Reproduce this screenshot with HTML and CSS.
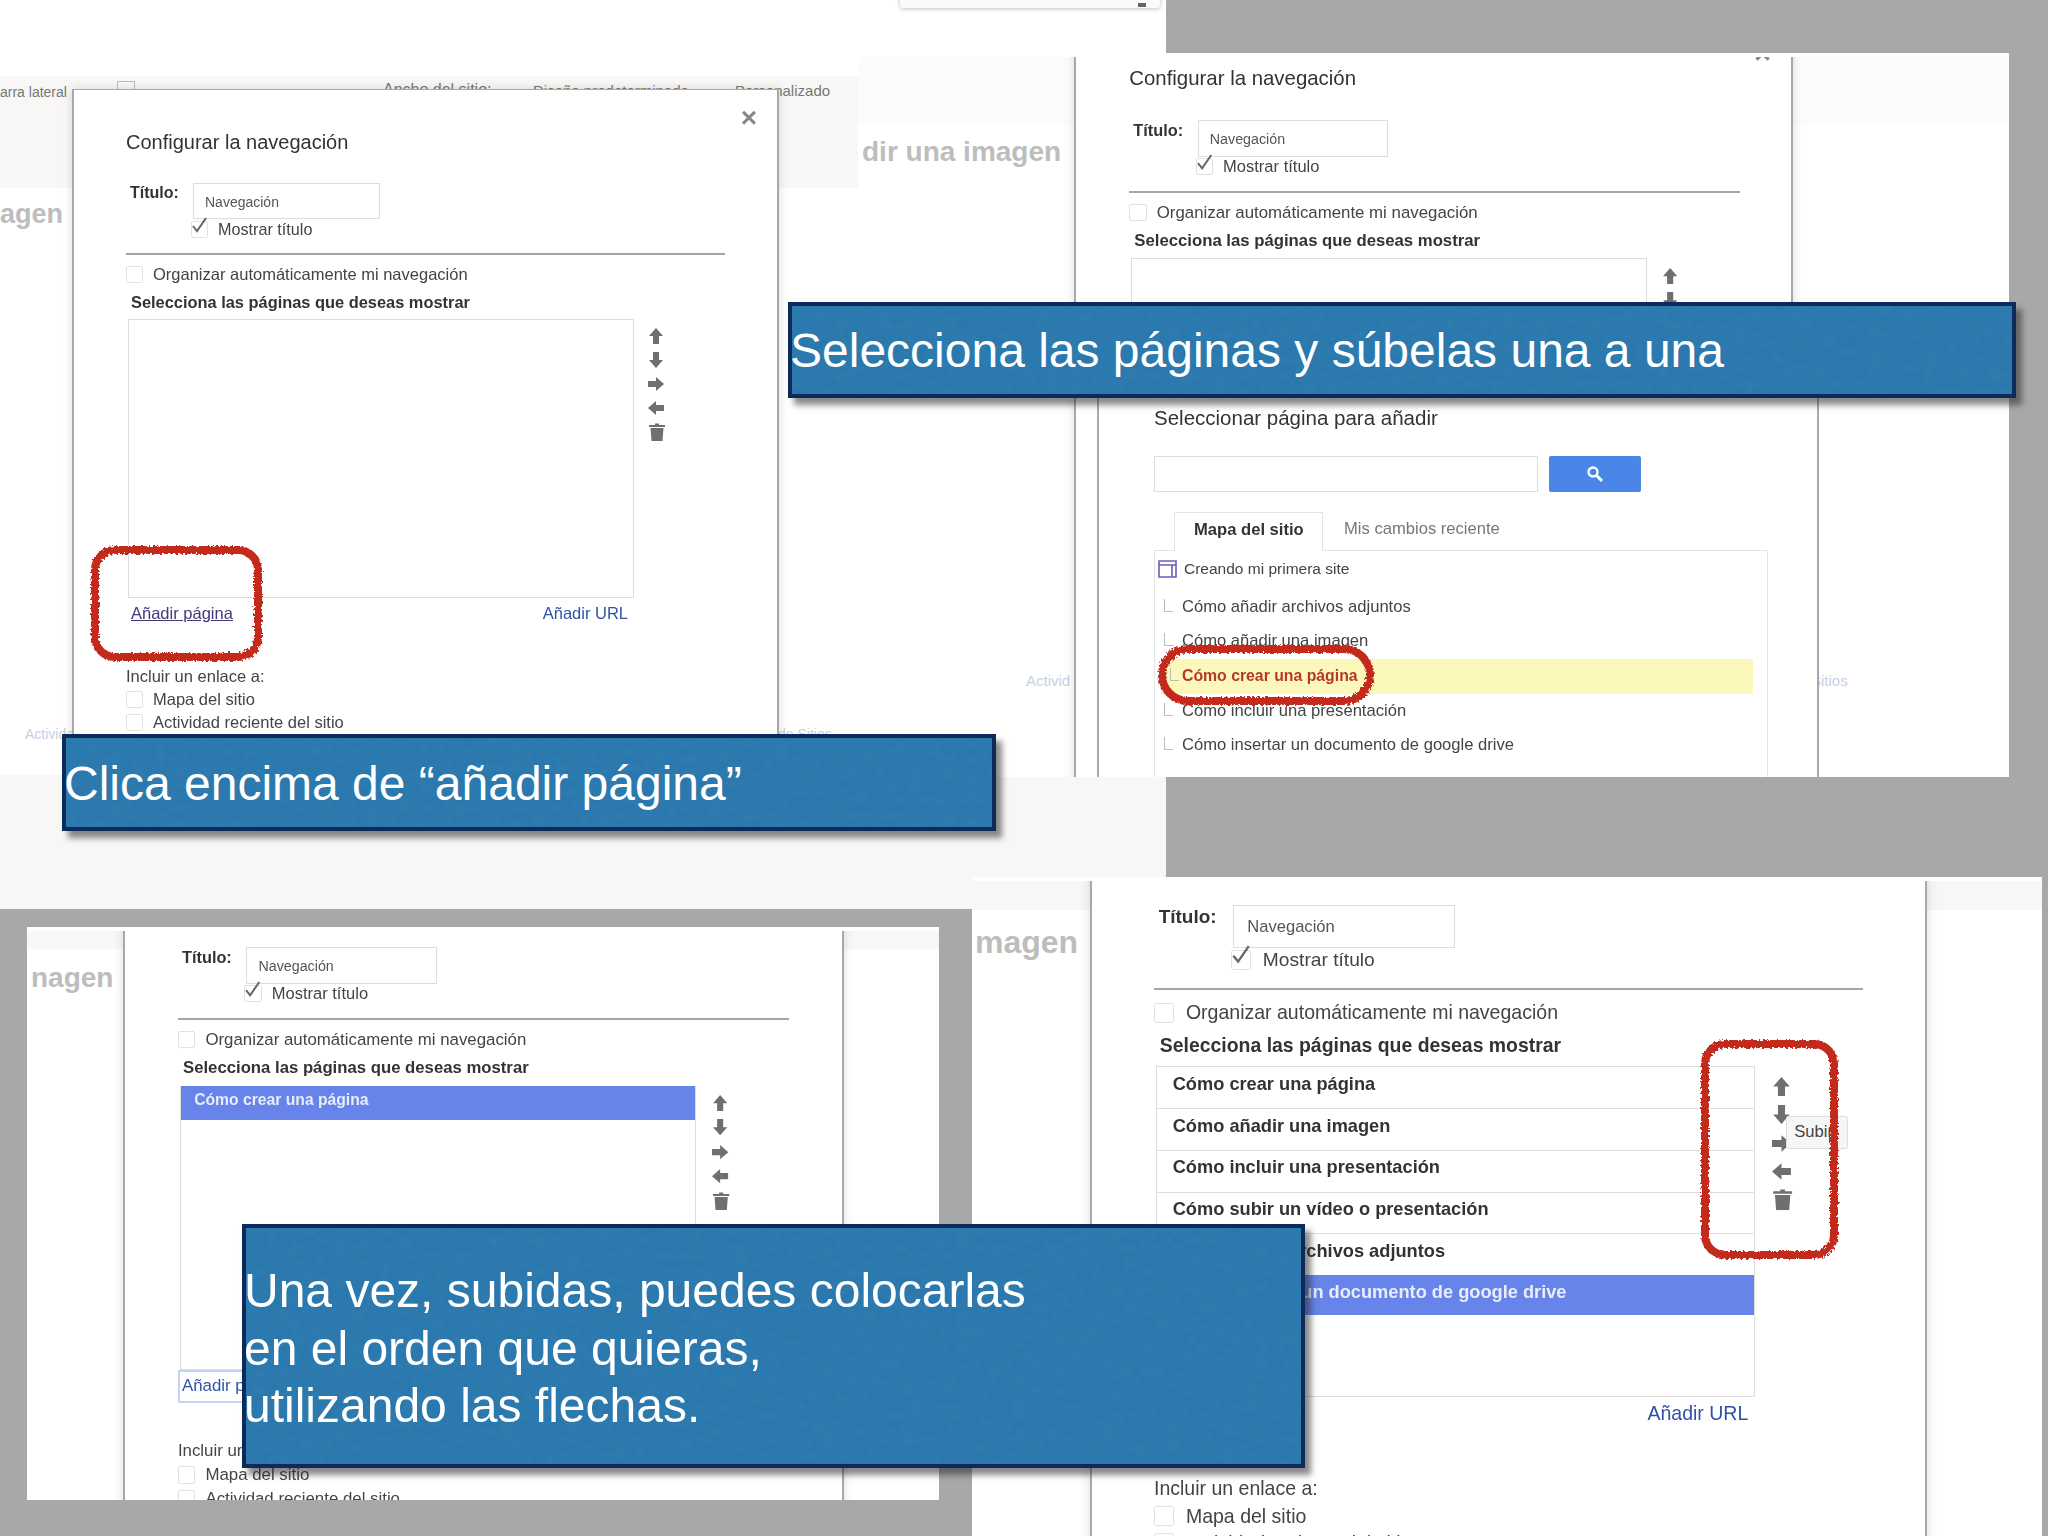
FILE: index.html
```html
<!DOCTYPE html>
<html lang="es">
  <head>
    <meta charset="UTF-8" />
    <title>Configurar la navegación</title>
    <link rel="stylesheet" href="styles.css">
  </head>
  <body>
    <svg class="defs" width="0" height="0">
      <defs>
        <filter id="rough" x="-10%" y="-10%" width="120%" height="120%">
          <feTurbulence type="fractalNoise" baseFrequency="0.4" numOctaves="3" seed="4" />
          <feDisplacementMap in="SourceGraphic" scale="5" />
        </filter>
        <filter id="grain" x="0" y="0" width="100%" height="100%">
          <feTurbulence type="fractalNoise" baseFrequency="0.09 0.12" numOctaves="4" seed="2" />
          <feColorMatrix values="0 0 0 0 0.08  0 0 0 0 0.32  0 0 0 0 0.52  0 0 0 1.4 -0.5" />
        </filter>
        <symbol id="i-up" viewBox="0 0 16 16"><path d="M8 0 L15 8 H11 V16 H5 V8 H1 Z" /></symbol>
        <symbol id="i-down" viewBox="0 0 16 16"><path d="M5 0 H11 V8 H15 L8 16 L1 8 H5 Z" /></symbol>
        <symbol id="i-right" viewBox="0 0 16 16"><path d="M0 5 H8 V1 L16 8 L8 15 V11 H0 Z" /></symbol>
        <symbol id="i-left" viewBox="0 0 16 16"><path d="M16 5 H8 V1 L0 8 L8 15 V11 H16 Z" /></symbol>
        <symbol id="i-trash" viewBox="0 0 16 18"><path d="M6 2 V0.5 H10 V2 H16 V4 H0 V2 Z M1.5 5 H14.5 L13.5 18 H2.5 Z" /></symbol>
        <symbol id="i-check" viewBox="0 0 18 18"><path d="M2 9 L6 14 L15 1" fill="none" stroke="#666" stroke-width="2" /></symbol>
      </defs>
    </svg>

    <!-- abajo a la derecha -->
    <section class="panel panel-d">
      <div class="strip strip-top"></div>
      <div class="ghost-title">magen</div>
      <div class="dialog">
        <div class="title-row">
          <span class="title-label">Título:</span>
          <span class="title-input">Navegación</span>
        </div>
        <div class="check-row show-title">
          <span class="box"><svg class="tick"><use href="#i-check" /></svg></span>
          <span>Mostrar título</span>
        </div>
        <div class="rule"></div>
        <div class="check-row auto-row"><span class="box"></span><span>Organizar automáticamente mi navegación</span></div>
        <div class="pick-title">Selecciona las páginas que deseas mostrar</div>
        <div class="list-row">
          <div class="page-list">
            <div class="page-item">Cómo crear una página</div>
            <div class="page-item">Cómo añadir una imagen</div>
            <div class="page-item">Cómo incluir una presentación</div>
            <div class="page-item">Cómo subir un vídeo o presentación</div>
            <div class="page-item">Cómo añadir archivos adjuntos</div>
            <div class="page-item selected">Cómo insertar un documento de google drive</div>
          </div>
          <div class="tools">
            <svg class="tool"><use href="#i-up" /></svg>
            <svg class="tool"><use href="#i-down" /></svg>
            <svg class="tool"><use href="#i-right" /></svg>
            <svg class="tool"><use href="#i-left" /></svg>
            <svg class="tool trash"><use href="#i-trash" /></svg>
            <span class="tooltip">Subir</span>
          </div>
        </div>
        <div class="link-row">
          <a class="link visited">Añadir página</a>
          <a class="link">Añadir URL</a>
        </div>
        <div class="include-title">Incluir un enlace a:</div>
        <div class="check-row include-row"><span class="box"></span><span>Mapa del sitio</span></div>
        <div class="check-row include-row"><span class="box"></span><span>Actividad reciente del sitio</span></div>
      </div>
      <div class="scribble scribble-tools"></div>
    </section>

    <!-- abajo a la izquierda -->
    <section class="panel panel-c">
      <div class="strip strip-top"></div>
      <div class="ghost-title">nagen</div>
      <div class="dialog">
        <div class="title-row">
          <span class="title-label">Título:</span>
          <span class="title-input">Navegación</span>
        </div>
        <div class="check-row show-title">
          <span class="box"><svg class="tick"><use href="#i-check" /></svg></span>
          <span>Mostrar título</span>
        </div>
        <div class="rule"></div>
        <div class="check-row auto-row"><span class="box"></span><span>Organizar automáticamente mi navegación</span></div>
        <div class="pick-title">Selecciona las páginas que deseas mostrar</div>
        <div class="list-row">
          <div class="page-list">
            <div class="page-item selected">Cómo crear una página</div>
          </div>
          <div class="tools">
            <svg class="tool"><use href="#i-up" /></svg>
            <svg class="tool"><use href="#i-down" /></svg>
            <svg class="tool"><use href="#i-right" /></svg>
            <svg class="tool"><use href="#i-left" /></svg>
            <svg class="tool trash"><use href="#i-trash" /></svg>
          </div>
        </div>
        <div class="link-row">
          <a class="link focused">Añadir página</a>
          <a class="link">Añadir URL</a>
        </div>
        <div class="include-title">Incluir un enlace a:</div>
        <div class="check-row include-row"><span class="box"></span><span>Mapa del sitio</span></div>
        <div class="check-row include-row"><span class="box"></span><span>Actividad reciente del sitio</span></div>
      </div>
    </section>

    <!-- arriba a la izquierda -->
    <section class="panel panel-a">
      <div class="menu-edge"><span class="menu-dot"></span></div>
      <div class="strip strip-top page-bar">
        <span class="bar-btn">arra lateral</span>
        <span class="bar-box"></span>
        <span class="bar-text bar-width">Ancho del sitio:</span>
        <span class="bar-text bar-default">Diseño predeterminado</span>
        <span class="bar-text bar-custom">Personalizado</span>
      </div>
      <div class="ghost-title">agen</div>
      <div class="strip strip-foot"></div>
      <a class="ghost-link ghost-left">Actividad</a>
      <a class="ghost-link ghost-right">de Sitios</a>
      <div class="dialog">
        <span class="close">×</span>
        <div class="dialog-title">Configurar la navegación</div>
        <div class="title-row">
          <span class="title-label">Título:</span>
          <span class="title-input">Navegación</span>
        </div>
        <div class="check-row show-title">
          <span class="box"><svg class="tick"><use href="#i-check" /></svg></span>
          <span>Mostrar título</span>
        </div>
        <div class="rule"></div>
        <div class="check-row auto-row"><span class="box"></span><span>Organizar automáticamente mi navegación</span></div>
        <div class="pick-title">Selecciona las páginas que deseas mostrar</div>
        <div class="list-row">
          <div class="page-list"></div>
          <div class="tools">
            <svg class="tool"><use href="#i-up" /></svg>
            <svg class="tool"><use href="#i-down" /></svg>
            <svg class="tool"><use href="#i-right" /></svg>
            <svg class="tool"><use href="#i-left" /></svg>
            <svg class="tool trash"><use href="#i-trash" /></svg>
          </div>
        </div>
        <div class="link-row">
          <a class="link visited">Añadir página</a>
          <a class="link">Añadir URL</a>
        </div>
        <div class="include-title">Incluir un enlace a:</div>
        <div class="check-row include-row"><span class="box"></span><span>Mapa del sitio</span></div>
        <div class="check-row include-row"><span class="box"></span><span>Actividad reciente del sitio</span></div>
      </div>
      <div class="scribble scribble-add"></div>
    </section>

    <!-- arriba a la derecha -->
    <section class="panel panel-b">
      <div class="strip strip-top"></div>
      <div class="ghost-title">dir una imagen</div>
      <a class="ghost-link ghost-left">Activid</a>
      <a class="ghost-link ghost-right">Sitios</a>
      <div class="dialog">
        <span class="close">×</span>
        <div class="dialog-title">Configurar la navegación</div>
        <div class="title-row">
          <span class="title-label">Título:</span>
          <span class="title-input">Navegación</span>
        </div>
        <div class="check-row show-title">
          <span class="box"><svg class="tick"><use href="#i-check" /></svg></span>
          <span>Mostrar título</span>
        </div>
        <div class="rule"></div>
        <div class="check-row auto-row"><span class="box"></span><span>Organizar automáticamente mi navegación</span></div>
        <div class="pick-title">Selecciona las páginas que deseas mostrar</div>
        <div class="list-row">
          <div class="page-list"></div>
          <div class="tools">
            <svg class="tool"><use href="#i-up" /></svg>
            <svg class="tool"><use href="#i-down" /></svg>
          </div>
        </div>
      </div>
      <div class="picker">
        <div class="dialog-title">Seleccionar página para añadir</div>
        <div class="search-row">
          <span class="search-input"></span>
          <span class="search-btn">
            <svg width="18" height="18" viewBox="0 0 18 18"><circle cx="7" cy="7" r="4.5" fill="none" stroke="#fff" stroke-width="2.4" /><path d="M10.5 10.5 L16 16" stroke="#fff" stroke-width="3" /></svg>
          </span>
        </div>
        <div class="tabs">
          <span class="tab active">Mapa del sitio</span>
          <span class="tab">Mis cambios reciente</span>
        </div>
        <div class="tree">
          <div class="tree-root">
            <svg width="19" height="18" viewBox="0 0 19 18"><path d="M1 1 H18 V17 H1 Z M1 5 H18 M14 5 V17" fill="none" stroke="#6a5fb8" stroke-width="1.6" /></svg>
            <span>Creando mi primera site</span>
          </div>
          <div class="tree-item">Cómo añadir archivos adjuntos</div>
          <div class="tree-item">Cómo añadir una imagen</div>
          <div class="tree-item current">Cómo crear una página</div>
          <div class="tree-item">Cómo incluir una presentación</div>
          <div class="tree-item">Cómo insertar un documento de google drive</div>
        </div>
      </div>
      <div class="scribble scribble-page"></div>
    </section>

    <div class="callout callout-click"><p class="callout-text">Clica encima de “añadir página”</p></div>
    <div class="callout callout-select"><p class="callout-text">Selecciona las páginas y súbelas una a una</p></div>
    <div class="callout callout-order"><p class="callout-text">Una vez, subidas, puedes colocarlas<br />en el orden que quieras,<br />utilizando las flechas.</p></div>
  </body>
</html>
```

FILE: styles.css
```css
* {
  margin: 0;
  padding: 0;
  box-sizing: border-box;
}
html,
body {
  height: 100%;
}
body {
  position: relative;
  overflow: hidden;
  background: #a7a9a9;
  font-family: "Liberation Sans", Arial, sans-serif;
  color: #444;
}
.defs {
  position: absolute;
}

/* recortes de pantalla, colocados como en la diapositiva */
.panel {
  position: absolute;
  overflow: hidden;
  background: #fff;
}
.panel::before {
  content: "";
  position: absolute;
  top: 0;
  left: 0;
  right: 0;
  height: 4px;
  background: #fff;
  z-index: 2;
}
.panel-a {
  left: 0;
  top: 0;
  width: 1166px;
  height: 909px;
}
.panel-a::before {
  display: none;
}
.panel-b {
  left: 858px;
  top: 53px;
  width: 1151px;
  height: 724px;
}
.panel-c {
  left: 27px;
  top: 927px;
  width: 912px;
  height: 573px;
}
.panel-d {
  left: 972px;
  top: 877px;
  width: 1070px;
  height: 659px;
}

.strip {
  position: absolute;
  left: 0;
  background: #f8f7f5;
}
.strip-top {
  top: 0;
  width: 100%;
  height: 33px;
}
.panel-a .strip-top {
  top: 76px;
  width: 858px;
  height: 112px;
}
.panel-b .strip-top {
  height: 72px;
  background: #fcfcfb;
}
.panel-c .strip-top {
  height: 22px;
}
.strip-foot {
  top: 775px;
  width: 100%;
  height: 134px;
}
.menu-edge {
  position: absolute;
  left: 900px;
  top: -10px;
  width: 260px;
  height: 18px;
  background: #fafafa;
  border-radius: 3px;
  box-shadow: 0 1px 4px rgba(0, 0, 0, 0.25);
}
.menu-dot {
  position: absolute;
  right: 14px;
  bottom: 1px;
  width: 8px;
  height: 4px;
  background: #666;
}
.page-bar {
  color: #777;
}
.page-bar span {
  position: absolute;
  white-space: nowrap;
}
.bar-btn {
  left: 0;
  top: 9px;
  font-size: 14px;
  line-height: 14px;
}
.bar-box {
  left: 117px;
  top: 5px;
  width: 18px;
  height: 12px;
  border: 1px solid #bbb;
}
.bar-width {
  left: 383px;
  top: 5px;
  font-size: 16px;
}
.bar-default {
  left: 533px;
  top: 6px;
  font-size: 15px;
}
.bar-custom {
  left: 735px;
  top: 6px;
  font-size: 15px;
}
.ghost-title {
  position: absolute;
  left: 0;
  top: 199px;
  font-size: 27px;
  font-weight: bold;
  color: #bdbdbd;
  white-space: nowrap;
}
.panel-b .ghost-title {
  left: 4px;
  top: 83px;
  font-size: 28px;
}
.panel-c .ghost-title {
  left: 4px;
  top: 35px;
  font-size: 28px;
}
.panel-d .ghost-title {
  left: 3px;
  top: 47px;
  font-size: 32px;
}
.ghost-link {
  position: absolute;
  top: 726px;
  font-size: 14px;
  color: #c6d0e4;
  white-space: nowrap;
}
.panel-a .ghost-left {
  left: 25px;
}
.panel-a .ghost-right {
  left: 778px;
}
.panel-b .ghost-link {
  top: 619px;
  font-size: 15px;
}
.panel-b .ghost-left {
  left: 168px;
}
.panel-b .ghost-right {
  left: 953px;
}

/* el cuadro de dialogo de Sites */
.dialog {
  position: relative;
  width: 707px;
  padding: 40px 0 30px 52px;
  background: #fff;
  border: 1px solid #a8a8a8;
  border-width: 1px 2px;
  box-shadow: 0 0 9px rgba(0, 0, 0, 0.14);
  font-size: 16.5px;
  color: #444;
  z-index: 1;
  filter: blur(0.4px);
}
.panel-a .dialog {
  margin: 89px 0 0 72px;
}
.panel-b .dialog {
  width: 705px;
  height: 800px;
  margin: -28.5px 0 0 212px;
  zoom: 1.02;
}
.panel-c .dialog {
  margin: -74.5px 0 0 94px;
  zoom: 1.02;
}
.panel-d .dialog {
  margin: -70px 0 0 100px;
  zoom: 1.184;
}
.close {
  position: absolute;
  top: 12px;
  right: 20px;
  font-size: 28px;
  line-height: 32px;
  color: #888;
  font-weight: bold;
}
.dialog-title {
  font-size: 20px;
  line-height: 24px;
  color: #333;
}
.picker .dialog-title {
  font-size: 20.5px;
}
.title-row {
  display: flex;
  margin-top: 29px;
}
.panel-c .title-row,
.panel-d .title-row {
  margin-top: 53px;
}
.title-label {
  width: 67px;
  padding-left: 4px;
  font-size: 16px;
  font-weight: bold;
  line-height: 20px;
  color: #333;
}
.title-input {
  width: 187px;
  height: 36px;
  padding: 0 11px;
  border: 1px solid #ddd;
  font-size: 14px;
  line-height: 36px;
  color: #555;
}
.check-row {
  display: flex;
  align-items: center;
  gap: 10px;
  height: 20px;
}
.box {
  position: relative;
  flex: none;
  width: 17px;
  height: 17px;
  border: 1px solid #e2e2e2;
  border-radius: 2px;
}
.tick {
  position: absolute;
  left: -1px;
  top: -5px;
  width: 18px;
  height: 18px;
}
.show-title {
  margin: 0 0 0 65px;
  font-size: 16.2px;
}
.rule {
  width: 599px;
  height: 2px;
  margin-top: 14px;
  background: #a5a5a5;
}
.auto-row {
  margin-top: 9px;
}
.pick-title {
  margin-top: 8px;
  padding-left: 5px;
  font-size: 16.4px;
  line-height: 20px;
  font-weight: bold;
  color: #333;
}
.list-row {
  display: flex;
  gap: 14px;
  margin: 7px 0 0 2px;
}
.page-list {
  width: 506px;
  height: 279px;
  border: 1px solid #ddd;
}
.page-item {
  height: 35.3px;
  padding: 4px 0 0 13px;
  border-bottom: 1px solid #ddd;
  font-size: 15.4px;
  font-weight: bold;
  line-height: 20px;
  color: #333;
}
.page-item.selected {
  height: 34px;
  margin-top: -1px;
  border-bottom: 0;
  background: #6684e9;
  color: #e8ecfb;
}
.tools {
  position: relative;
  display: flex;
  flex-direction: column;
  gap: 8px;
  padding-top: 9px;
}
.panel-c .tools {
  margin-left: 2px;
}
.tool {
  width: 16px;
  height: 16px;
  fill: #6f6f6f;
}
.tool.trash {
  width: 18px;
  height: 18px;
  margin-top: -1px;
}
.tooltip {
  position: absolute;
  left: 12px;
  top: 42px;
  width: 52px;
  height: 28px;
  padding-left: 6px;
  background: #f6f6f6;
  border: 1px solid #ddd;
  border-radius: 2px;
  font-size: 14px;
  line-height: 26px;
}
.link-row {
  display: flex;
  justify-content: space-between;
  width: 497px;
  margin: 5px 0 0 5px;
  line-height: 20px;
}
.link {
  color: #2f52a8;
}
.link.visited {
  color: #40397c;
  text-decoration: underline;
}
.panel-d .link.visited {
  visibility: hidden;
}
.link.focused {
  margin: -5px 0 -5px -5px;
  padding: 4px 4px 4px 2px;
  border: 2px solid #c4d4f0;
  color: #2f52a8;
}
.include-title {
  margin-top: 43px;
  line-height: 20px;
}
.include-row {
  margin-top: 3px;
}

/* segundo dialogo: selector de pagina */
.picker {
  position: absolute;
  left: 239px;
  top: 336px;
  width: 722px;
  height: 400px;
  padding: 16px 0 0 55px;
  background: #fff;
  border: 1px solid #a8a8a8;
  border-width: 1px 2px;
  font-size: 16.6px;
  color: #444;
  z-index: 1;
  filter: blur(0.4px);
}
.search-row {
  display: flex;
  gap: 11px;
  margin-top: 26px;
}
.search-input {
  width: 384px;
  height: 36px;
  border: 1px solid #ddd;
}
.search-btn {
  display: flex;
  align-items: center;
  justify-content: center;
  width: 92px;
  height: 36px;
  background: #4a86e8;
  border-radius: 2px;
}
.tabs {
  display: flex;
  margin: 20px 0 -1px 20px;
  position: relative;
}
.tab {
  padding-left: 21px;
  line-height: 33px;
  color: #777;
}
.tab.active {
  width: 149px;
  height: 39px;
  padding-left: 19px;
  border: 1px solid #e4e4e4;
  border-bottom: 1px solid #fff;
  font-weight: bold;
  line-height: 33px;
  color: #333;
}
.tree {
  width: 614px;
  height: 240px;
  border: 1px solid #e4e4e4;
}
.tree-root {
  display: flex;
  align-items: center;
  gap: 7px;
  height: 38.5px;
  padding: 0 0 2.5px 3px;
  font-size: 15.5px;
}
.tree-item {
  position: relative;
  height: 34.7px;
  padding-left: 27px;
  line-height: 34px;
}
.tree-item::before {
  content: "";
  position: absolute;
  left: 9px;
  top: 9px;
  width: 8px;
  height: 12px;
  border-left: 1px solid #bbb;
  border-bottom: 1px solid #bbb;
}
.tree-item.current {
  margin: 0 14px 0 6px;
  padding-left: 21px;
  background: #fcf8bb;
  font-size: 15.8px;
  font-weight: bold;
  color: #b5382c;
}

/* marcas rojas a mano */
.scribble {
  position: absolute;
  border: 8px solid #c4291b;
  border-radius: 24px;
  filter: url(#rough);
  z-index: 3;
}
.scribble-add {
  left: 91px;
  top: 546px;
  width: 171px;
  height: 115px;
}
.scribble-page {
  left: 300px;
  top: 592px;
  width: 216px;
  height: 60px;
  border-radius: 30px;
}
.scribble-tools {
  left: 729px;
  top: 163px;
  width: 137px;
  height: 219px;
}

/* rotulos azules */
.callout {
  position: absolute;
  background: #2a78ad;
  border: 4px solid #0c2a5a;
  box-shadow: 6px 7px 6px rgba(40, 40, 40, 0.55);
  font-size: 48px;
  color: #fff;
  z-index: 5;
  white-space: nowrap;
}
.callout::before {
  content: "";
  position: absolute;
  inset: 0;
  background: #2a78ad;
  filter: url(#grain);
  opacity: 0.2;
  z-index: -1;
}
.callout-text {
  margin-left: -2px;
}
.callout-click {
  left: 62px;
  top: 734px;
  width: 934px;
  height: 97px;
  line-height: 91px;
}
.callout-select {
  left: 788px;
  top: 302px;
  width: 1228px;
  height: 96px;
  line-height: 90px;
}
.callout-order {
  left: 242px;
  top: 1224px;
  width: 1063px;
  height: 244px;
  padding-top: 34px;
  line-height: 57.5px;
}
```
